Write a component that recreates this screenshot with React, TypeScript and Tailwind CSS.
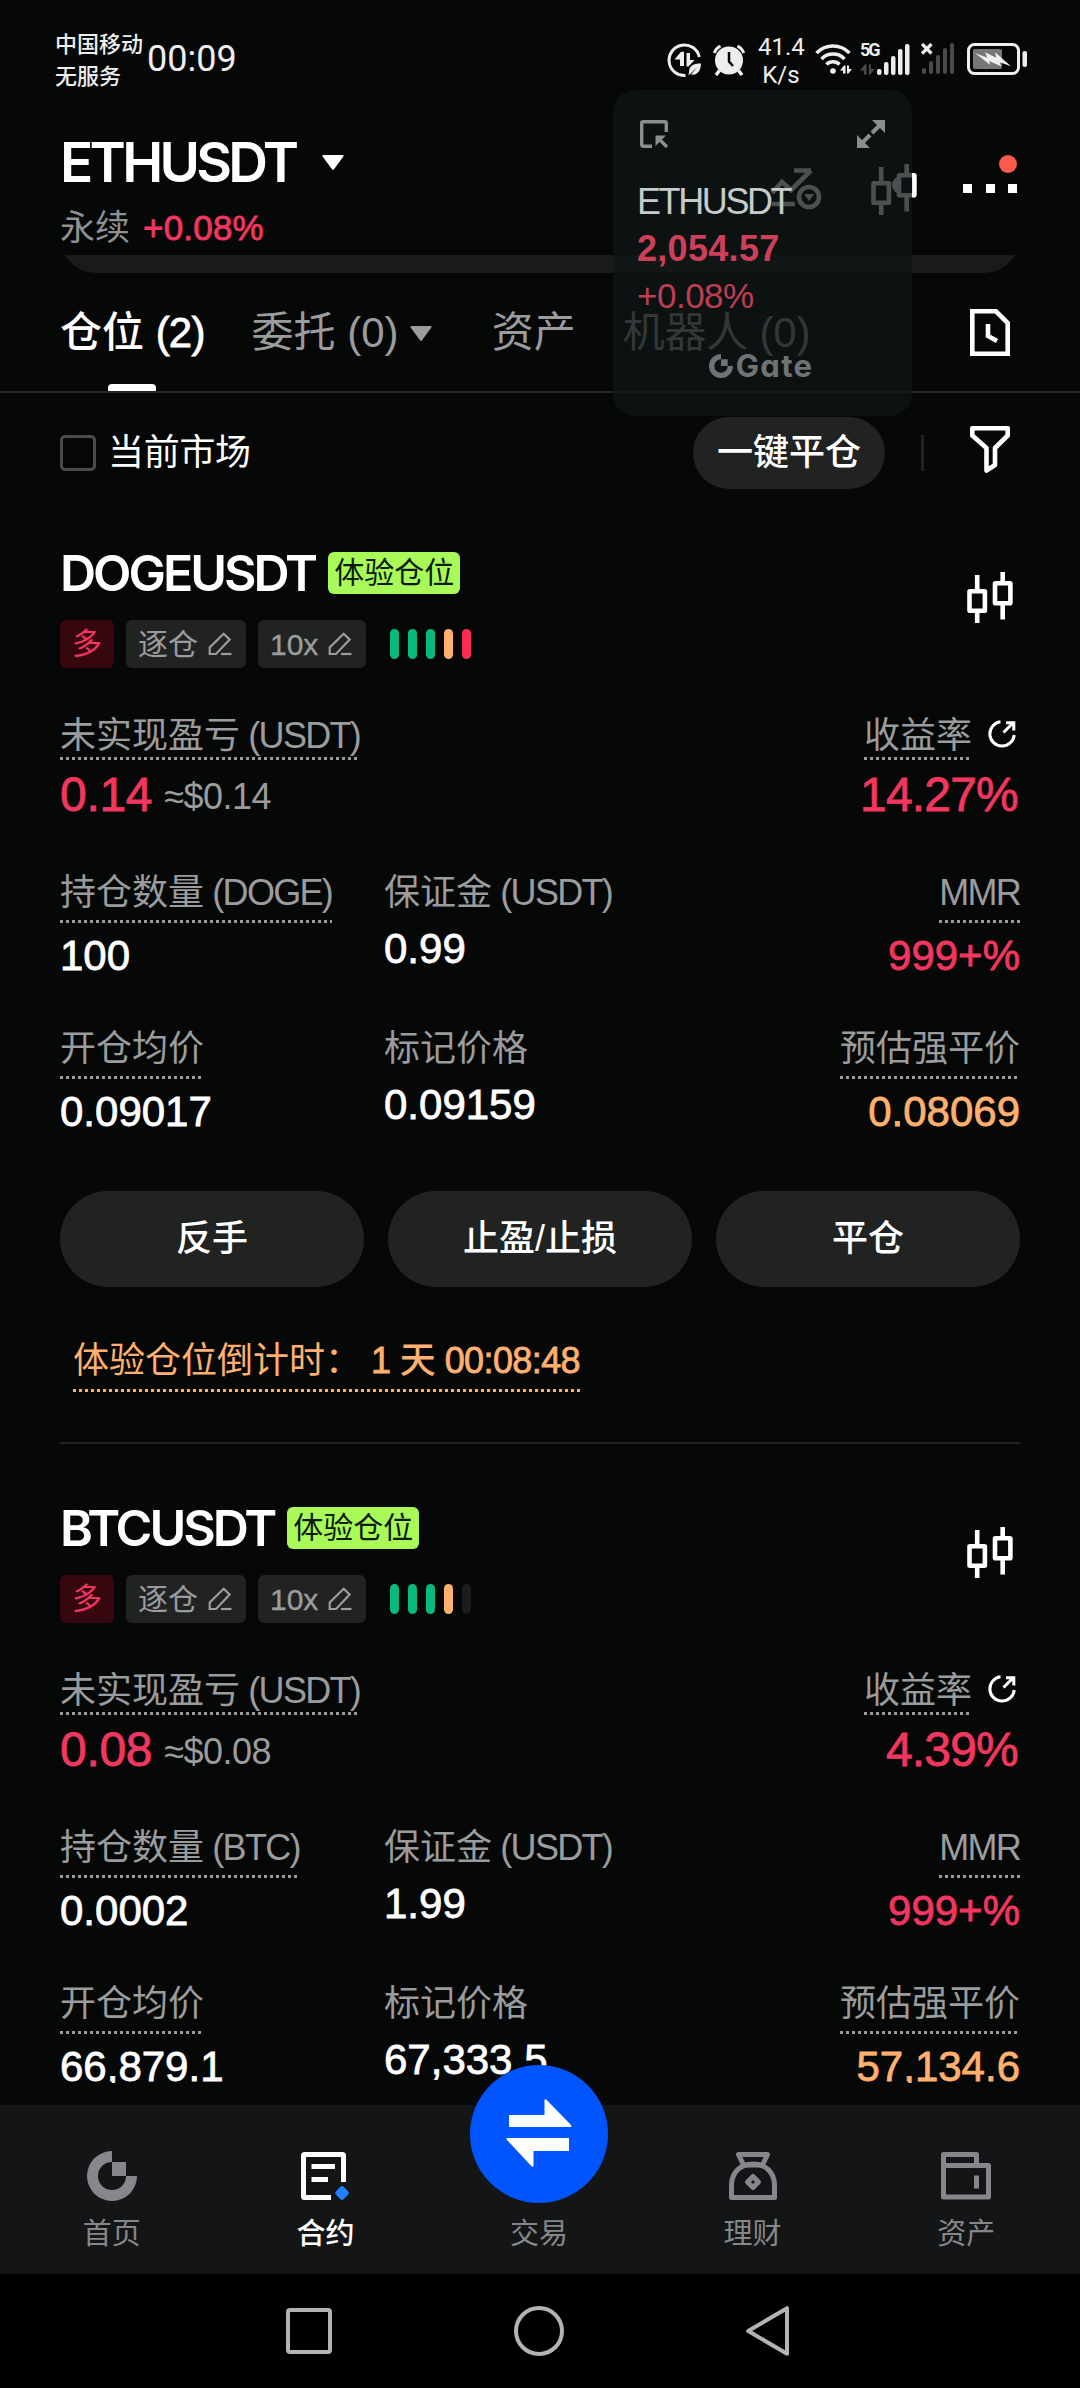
import React from 'react';
import clsx from 'clsx';

type Bar = 'green' | 'orange' | 'red' | 'empty';

interface Position {
  symbol: string;
  coin: string;
  pnl: string;
  pnlUsd: string;
  roe: string;
  size: string;
  margin: string;
  entry: string;
  mark: string;
  liq: string;
  bars: Bar[];
}

const positions: Position[] = [
  {
    symbol: 'DOGEUSDT',
    coin: 'DOGE',
    pnl: '0.14',
    pnlUsd: '≈$0.14',
    roe: '14.27%',
    size: '100',
    margin: '0.99',
    entry: '0.09017',
    mark: '0.09159',
    liq: '0.08069',
    bars: ['green', 'green', 'green', 'orange', 'red'],
  },
  {
    symbol: 'BTCUSDT',
    coin: 'BTC',
    pnl: '0.08',
    pnlUsd: '≈$0.08',
    roe: '4.39%',
    size: '0.0002',
    margin: '1.99',
    entry: '66,879.1',
    mark: '67,333.5',
    liq: '57,134.6',
    bars: ['green', 'green', 'green', 'orange', 'empty'],
  },
];

const barColors: Record<Bar, string> = {
  green: 'bg-[#06b97c]',
  orange: 'bg-[#ffb06e]',
  red: 'bg-[#ff2b57]',
  empty: 'bg-[#1b1c1c]',
};

// Liberation Sans has no medium weight, a thin stroke fakes it
const medium = '[-webkit-text-stroke:0.8px_currentColor]';

function Candles({ className }: { className?: string }) {
  return (
    <svg viewBox="0 0 46 51" className={clsx('w-[46px] h-[51px] shrink-0', className)} fill="none" stroke="currentColor" strokeWidth="4.6">
      <rect x="2.5" y="19.3" width="15.4" height="19.4" rx="0.5" />
      <path d="M10.2 3v16M10.2 39v12" />
      <rect x="28" y="11.3" width="15.4" height="20" rx="0.5" />
      <path d="M35.7 0v11M35.7 32v15.5" />
    </svg>
  );
}

function Pencil() {
  return (
    <svg viewBox="0 0 24 24" className="w-6 h-6 shrink-0" fill="none" stroke="currentColor" strokeWidth="2.2">
      <path d="M1.700 22V15.500L15.700 1.800l6 5.800L8 22H1.700Z" />
      <path d="M13 22h10.500" />
    </svg>
  );
}

function GateMark({ className }: { className?: string }) {
  return (
    <svg viewBox="0 0 50 50" className={className} fill="currentColor">
      <path d="M25 0A25 25 0 1 0 50 25H39A14 14 0 1 1 25 11V0Z" />
      <path d="M25 11h14v14H25z" />
    </svg>
  );
}

function Caret({ className }: { className?: string }) {
  return (
    <svg viewBox="0 0 22 15" className={clsx('w-[22px] h-[15px]', className)} fill="currentColor">
      <path d="M1.4 0h19.2c.9 0 1.3.9.8 1.6l-9.4 12.6c-.5.7-1.5.7-2 0L.6 1.6C.1.9.5 0 1.4 0Z" />
    </svg>
  );
}

function DottedLine() {
  return (
    <div className="h-[3px] w-full bg-[repeating-linear-gradient(90deg,currentColor_0_3px,transparent_3px_6px)]" />
  );
}

function StatusBar() {
  return (
    <div className="h-[117px] shrink-0 flex items-start justify-between pl-[55px] pr-[53px] text-[#eeeeee]">
      <div className="flex items-start">
        <div className="w-[92px] pt-[29px] text-[22px] leading-8 font-medium whitespace-nowrap">
          <div>中国移动</div>
          <div>无服务</div>
        </div>
        <div className="pt-[38px] font-[Roboto] text-[36px] leading-[42px]">00:09</div>
      </div>
      <div className="flex items-start">
        {/* data saver */}
        <svg viewBox="0 0 36 36" className="w-9 h-9 mt-[43px]" fill="currentColor">
          <path d="M32.300 14A15.300 15.300 0 1 0 18.500 32.500" stroke="currentColor" strokeWidth="3" fill="none" />
          <path d="M7.500 16.500 14 8.800h3V23h-4v-6.500Z" />
          <path d="M19.500 10h3.500v7h4.500l-6 6.500h-2Z" />
          <path d="M22 29c0-6 4-8.500 12-8.500-.3 8-4 12-10 11l6-7-8.500 8Z" />
        </svg>
        <svg viewBox="0 0 32 32" className="w-8 h-8 mt-[44px] ml-[10px]" fill="currentColor">
          <circle cx="16" cy="16.500" r="14" />
          <path d="M1.200 9A13 13 0 0 1 7.500 2M24.500 2A13 13 0 0 1 30.800 9" stroke="currentColor" strokeWidth="3" fill="none" />
          <path d="M6.500 26.500 3 31M25.500 26.500 29 31" stroke="currentColor" strokeWidth="3.500" />
          <path d="M16 8v9.500l4 4.500" stroke="#060807" strokeWidth="2.500" fill="none" />
        </svg>
        <div className="w-[46px] ml-[13px] pt-[33px] text-center font-[Roboto] text-[24px] leading-7 whitespace-nowrap">
          <div>41.4</div>
          <div>K/s</div>
        </div>
        <svg viewBox="0 0 37 31" className="w-[37px] h-[31px] mt-[43px] ml-[11px]" fill="none" stroke="currentColor" strokeWidth="3.500">
          <path d="M1.500 10a23 23 0 0 1 33 0M6.500 16a16 16 0 0 1 23 0M11.500 21.500a9 9 0 0 1 13 0" />
          <circle cx="18" cy="28" r="2.800" fill="currentColor" stroke="none" />
          <path d="M25 27.500 29 22.500h1.500v8H28v-3ZM32 22.500h2V26h3l-3.500 4.500H32Z" fill="currentColor" stroke="none" />
        </svg>
        <div className="w-[50px] h-8 mt-[43px] ml-2 flex items-end relative">
          <span className="absolute left-0 -top-px font-[Roboto] text-[18px] leading-4 font-bold tracking-[-2px]">5G</span>
          <svg viewBox="0 0 50 31" className="w-[50px] h-[31px]" fill="currentColor">
            <path d="M0 26.500 5 20.500h1.500v10H4v-4ZM9 20.500h2V25h3.500l-4 5.500H9Z" fill="#4a4a4a" />
            <rect x="17" y="25" width="4.500" height="6" rx="2" />
            <rect x="24" y="18" width="4.500" height="13" rx="2" />
            <rect x="31" y="12" width="4.500" height="19" rx="2" />
            <rect x="38" y="5" width="4.500" height="26" rx="2" />
            <rect x="45" y="0" width="4.500" height="31" rx="2" />
          </svg>
        </div>
        <svg viewBox="0 0 34 31" className="w-[34px] h-[31px] mt-[43px] ml-[11px]" fill="#4a4a4a">
          <path d="m1 1 9.500 9.500M10.500 1 1 10.500" stroke="#eee" strokeWidth="3.300" />
          <rect x="1" y="25" width="4" height="6" rx="2" />
          <rect x="8" y="18" width="4" height="13" rx="2" />
          <rect x="15" y="12" width="4" height="19" rx="2" />
          <rect x="22" y="5" width="4" height="26" rx="2" />
          <rect x="29" y="0" width="4" height="31" rx="2" />
        </svg>
        <svg viewBox="0 0 60 32" className="w-[60px] h-8 mt-[43px] ml-3" fill="none">
          <rect x="1.500" y="1.500" width="50" height="29" rx="6" stroke="#eee" strokeWidth="3" />
          <rect x="6" y="6" width="29" height="20" rx="2" fill="#777" />
          <path d="m8 10 12.300 4.700L18 9.300l11.300 5.400L28 9.300l16 14-11.300-4L34 23.300 22 18l1.300 4Z" fill="#eee" />
          <rect x="55.500" y="8" width="4.500" height="16" rx="2" fill="#eee" />
        </svg>
      </div>
    </div>
  );
}

function Header() {
  return (
    <header className="h-[156px] shrink-0 flex justify-between pl-[60px] pr-[63px]">
      <div className="flex flex-col">
        <div className="flex items-center h-[88px]">
          <h1 className="font-[Inter] text-[55px] font-semibold tracking-[-3.700px] leading-[88px] pt-0.5">ETHUSDT</h1>
          <Caret className="ml-[27px] mt-0.5" />
        </div>
        <div className="flex items-center h-[46px] gap-[13px] text-[35px]">
          <span className="text-[#8f9192]">永续</span>
          <span className={clsx('text-[#f2365f] tracking-[0.200px]', medium)}>+0.08%</span>
        </div>
      </div>
      <div className="flex items-start h-[120px] pt-[47px]">
        <svg viewBox="0 0 52 44" className="w-[52px] h-11 mt-1" fill="none" stroke="currentColor" strokeWidth="4.600">
          <path d="M2 25 12 14l9 8L41 2.500M24 2.500h17M2 36h23" />
          <circle cx="39" cy="29" r="10" />
          <path d="m34 26 5 7 5-7Z" fill="currentColor" stroke="none" />
        </svg>
        <Candles className="ml-[49px]" />
        <div className="relative ml-[46px] mt-[20px] flex gap-[13.500px]">
          <span className="w-[9px] h-[9px] bg-white" />
          <span className="w-[9px] h-[9px] bg-white" />
          <span className="w-[9px] h-[9px] bg-white" />
          <span className="absolute right-0 -top-[29px] w-[18px] h-[18px] rounded-full bg-[#fb5a4a]" />
        </div>
      </div>
    </header>
  );
}

function Tabs() {
  return (
    <div className="h-[120px] shrink-0 border-b-2 border-[#252626] flex items-start justify-between px-[60px] text-[42px] leading-[60px] text-[#9a9c9d]">
      <div className="flex pt-[30px] whitespace-nowrap">
        <div className="relative text-white font-medium">
          仓位 <span className={clsx('tracking-[-0.800px]', medium)}>(2)</span>
          <span className="absolute left-[48px] top-[81px] w-12 h-[7px] rounded-t-[4px] bg-white" />
        </div>
        <div className="flex items-center ml-[47px]">
          委托 (0)
          <Caret className="ml-[11px]" />
        </div>
        <div className="ml-[60px]">资产</div>
        <div className="ml-[47px] tracking-[-0.200px]">机器人 (0)</div>
      </div>
      <svg viewBox="0 0 40 47" className="w-10 h-[47px] mt-9 mr-[10px] text-white" fill="none" stroke="currentColor" strokeWidth="4.600">
        <path d="M2.300 2.300H26L37.700 14v30.700H2.300Z" />
        <path d="M18 15v12l9 5" />
      </svg>
    </div>
  );
}

function Filters() {
  return (
    <div className="h-[120px] shrink-0 flex items-center justify-between pl-[60px] pr-[70px]">
      <div className="flex items-center gap-3">
        <span className="w-9 h-9 rounded-[5px] border-[3px] border-[#4a4b4d]" />
        <span className="text-[36px] leading-9 tracking-[-0.300px]">当前市场</span>
      </div>
      <div className="flex items-center">
        <button className="w-[192px] h-[72px] rounded-full bg-[#212222] text-[36px] font-medium">一键平仓</button>
        <span className="w-[3px] h-9 ml-9 bg-[#212323]" />
        <svg viewBox="0 0 40 47" className="w-10 h-[47px] ml-[46px] mb-2" fill="none" stroke="currentColor" strokeWidth="4.600" strokeLinejoin="round">
          <path d="M2.300 2.300h35.400v7.200L25 22v17l-8.500 5.500V22L2.300 9.500Z" />
        </svg>
      </div>
    </div>
  );
}

function Label({ text, unit }: { text?: string; unit?: string }) {
  return (
    <>
      {text}
      {unit && <span className="tracking-[-1.700px]">{text ? ` (${unit})` : unit}</span>}
    </>
  );
}

interface StatProps {
  label?: string;
  unit?: string;
  value: string;
  dotted?: boolean;
  right?: boolean;
  tone?: string;
}

function Stat({ label, unit, value, dotted, right, tone }: StatProps) {
  return (
    <div className={clsx('flex flex-col', right ? 'items-end' : 'items-start')}>
      <div className="text-[#9a9c9d] text-[36px]">
        <div className="h-[55px] leading-[56px] whitespace-nowrap">
          <Label text={label} unit={unit} />
        </div>
        {dotted && <DottedLine />}
      </div>
      <div className={clsx('text-[42px] leading-[60px]', medium, dotted ? 'mt-[3px]' : '-mt-px', tone)}>{value}</div>
    </div>
  );
}

function Tag({ children }: { children: React.ReactNode }) {
  return (
    <span className="h-12 pl-3 pr-[14px] flex items-center gap-[10px] rounded-[6px] bg-[#212323] text-[#9a9c9d] text-[30px]">
      {children}
      <Pencil />
    </span>
  );
}

function PositionCard({ pos }: { pos: Position }) {
  return (
    <section className="px-[60px] flex flex-col shrink-0">
      <div className="flex justify-between">
        <div className="flex flex-col">
          <div className="flex items-center h-[66px] gap-[13px]">
            <h2 className="font-[Inter] text-[50px] font-semibold tracking-[-3px] leading-[66px]">{pos.symbol}</h2>
            <span className="h-[42px] px-1.5 rounded-[6px] bg-[#a9fa58] text-[#0a1a06] text-[30px] leading-[42px]">体验仓位</span>
          </div>
          <div className="flex items-center gap-3 mt-[14px]">
            <span className="w-[54px] h-12 rounded-[6px] bg-[#37070f] text-[#f2365f] text-[30px] leading-[48px] text-center">多</span>
            <Tag>逐仓</Tag>
            <Tag>
              <span className="[-webkit-text-stroke:0.4px_currentColor]">10x</span>
            </Tag>
            <div className="flex gap-[9px] ml-3">
              {pos.bars.map((b, i) => (
                <span key={i} className={clsx('w-[9px] h-[30px] rounded-full', barColors[b])} />
              ))}
            </div>
          </div>
        </div>
        <Candles className="mt-8 mr-[7px]" />
      </div>

      {/* PnL */}
      <div className="flex justify-between mt-[40px]">
        <div className="flex flex-col items-start">
          <div className="text-[36px] text-[#9a9c9d]">
            <div className="h-[49px] leading-[56px] whitespace-nowrap">
              <Label text="未实现盈亏" unit="USDT" />
            </div>
            <DottedLine />
          </div>
          <div className="flex items-center gap-3 leading-[71px]">
            <span className={clsx('text-[48px] leading-[70px] text-[#f2365f] tracking-[-0.300px]', medium)}>{pos.pnl}</span>
            <span className="text-[36px] leading-[70px] pt-0.5 -mb-0.5 text-[#9a9c9d] tracking-[-0.500px]">{pos.pnlUsd}</span>
          </div>
        </div>
        <div className="flex flex-col items-end">
          <div className="flex items-center">
            <div className="text-[36px] text-[#9a9c9d]">
              <div className="h-[49px] leading-[56px]">收益率</div>
              <DottedLine />
            </div>
            <svg viewBox="0 0 28 28" className="w-7 h-7 ml-4 mr-1" fill="none" stroke="currentColor" strokeWidth="3">
              <path d="M12.500 1.800A12.200 12.200 0 1 0 26.200 15" />
              <path d="M15.500 12.500 25 3M18 2.700h7.800V10.500" />
            </svg>
          </div>
          <div className={clsx('text-[48px] leading-[70px] text-[#f2365f] tracking-[-0.800px] pr-0.5', medium)}>{pos.roe}</div>
        </div>
      </div>

      <div className="grid grid-cols-[324px_1fr_auto] gap-y-[35px] mt-[35px]">
        <Stat label="持仓数量" unit={pos.coin} value={pos.size} dotted />
        <Stat label="保证金" unit="USDT" value={pos.margin} />
        <Stat unit="MMR" value="999+%" dotted right tone="text-[#f2365f]" />
        <Stat label="开仓均价" value={pos.entry} dotted />
        <Stat label="标记价格" value={pos.mark} />
        <Stat label="预估强平价" value={pos.liq} dotted right tone="text-[#ffb06e]" />
      </div>

      <div className="grid grid-cols-3 gap-6 mt-[49px]">
        {['反手', '止盈/止损', '平仓'].map((label) => (
          <button key={label} className="h-24 rounded-full bg-[#212222] text-[36px] font-medium">{label}</button>
        ))}
      </div>

      <div className="mt-[45px] ml-[13px] self-start text-[#ffb06e] text-[36px]">
        <div className="flex h-[57px] leading-[58px] whitespace-nowrap">
          <span>体验仓位倒计时：</span>
          <span className="ml-[10px] font-medium tracking-[-0.600px]">
            <span className={medium}>1</span> 天 <span className={medium}>00:08:48</span>
          </span>
        </div>
        <DottedLine />
      </div>
      <div className="h-0.5 mt-[50px] bg-[#212222]" />
    </section>
  );
}

function PriceWidget() {
  return (
    <div className="absolute left-[613px] top-[90px] w-[299px] h-[326px] rounded-[22px] bg-[#0f1516]/75 pt-[30px] pl-6 pr-[27px] flex flex-col">
      <div className="flex justify-between text-[#8b8e8f]">
        <svg viewBox="0 0 28 28" className="w-7 h-7 ml-[3px]" fill="none" stroke="currentColor" strokeWidth="3.400">
          <path d="M26.300 12V3.200a1.500 1.500 0 0 0-1.500-1.500H3.200a1.500 1.500 0 0 0-1.500 1.500v21.600a1.500 1.500 0 0 0 1.500 1.500H12" />
          <path d="m18 18 9 9" />
          <path d="M15.500 15.500H26L15.500 26Z" fill="currentColor" stroke="none" />
        </svg>
        <svg viewBox="0 0 28 28" className="w-7 h-7" fill="currentColor">
          <path d="M15 0h13v13ZM0 15v13h13Z" />
          <path d="m15 13 8-8M5 23l8-8" stroke="currentColor" strokeWidth="4" />
        </svg>
      </div>
      <div className="mt-[30px] text-[36px] leading-[47px] tracking-[-2.400px] text-[#c8cbcc]">ETHUSDT</div>
      <div className="text-[36px] leading-[47px] font-bold tracking-[0.300px] text-[#cc4159]">2,054.57</div>
      <div className="text-[35px] leading-[47px] tracking-[-0.500px] text-[#c03d54]">+0.08%</div>
      <div className="mt-[31px] flex items-center justify-center gap-[3px] text-[#707375]">
        <GateMark className="w-6 h-6" />
        <span className="font-[Inter] font-bold text-[31px] leading-8 tracking-[1.300px] [font-feature-settings:'cv11']">Gate</span>
      </div>
      <span className="absolute left-[279px] top-[86px] w-[9px] h-[18px] rounded-l-full bg-[#4b4f51]" />
    </div>
  );
}

function NavItem({ label, active, children }: { label: string; active?: boolean; children: React.ReactNode }) {
  return (
    <div className={clsx('flex-1 flex flex-col items-center pt-[46px]', active ? 'text-white' : 'text-[#85878a]')}>
      <div className="h-[50px] flex items-center">{children}</div>
      <div className={clsx('mt-[11px] text-[29px] leading-[44px]', active && 'font-medium')}>{label}</div>
    </div>
  );
}

function BottomNav() {
  return (
    <nav className="relative h-[169px] shrink-0 bg-[#141516] flex pl-[5px] pr-[7px]">
      <NavItem label="首页">
        <GateMark className="w-[50px] h-[50px]" />
      </NavItem>
      <NavItem label="合约" active>
        <svg viewBox="0 0 50 50" className="w-[50px] h-[50px]" fill="none" stroke="currentColor" strokeWidth="5">
          <path d="M43.500 31V4.500a1 1 0 0 0-1-1h-38a1 1 0 0 0-1 1v41a1 1 0 0 0 1 1H31" />
          <path d="M11.500 15.500H35M11.500 28.500H28" />
          <rect x="36.500" y="36.500" width="11" height="11" rx="2.500" transform="rotate(45 42 42)" fill="#2080ff" stroke="none" />
        </svg>
      </NavItem>
      <NavItem label="交易">
        <span />
      </NavItem>
      <NavItem label="理财">
        <svg viewBox="0 0 50 50" className="w-[50px] h-[50px]" fill="none" stroke="currentColor" strokeWidth="5" strokeLinejoin="round">
          <path d="M10.500 3.500h29L34.500 14h-19Z" />
          <path d="M3.500 46.500V34C3.500 21 13 13 25 13s21.500 8 21.500 21v12.500Z" />
          <path d="m25 25.500 5.500 5.500-5.500 5.500-5.500-5.500Z" />
        </svg>
      </NavItem>
      <NavItem label="资产">
        <svg viewBox="0 0 50 50" className="w-[50px] h-[50px]" fill="none" stroke="currentColor" strokeWidth="5" strokeLinejoin="round">
          <path d="M2.500 14.500h45v31.500h-45V3.500h33v11" />
          <path d="M35.500 24.500v13" />
        </svg>
      </NavItem>
      <div className="absolute left-[470px] -top-10 w-[138px] h-[138px] rounded-full bg-[#0055ff] flex items-center justify-center">
        <svg viewBox="-1 -2 68 72" className="w-[68px] h-[72px]" fill="#fff">
          <path d="M3 15h35.500V.5c0-1.400 1-1.800 2-.8L65 25c1 1 .6 2-.8 2H3V15Z" />
          <path d="M63 51H27.500v14.500c0 1.400-1 1.800-2 .8L1 40c-1-1-.6-2 .8-2H63v13Z" />
        </svg>
      </div>
    </nav>
  );
}

function SystemNav() {
  return (
    <div className="h-[114px] shrink-0 bg-black flex items-center pl-[286px] text-[#b3b3b3]">
      <span className="w-[46px] h-[46px] rounded-[4px] border-4 border-[#b3b3b3]" />
      <span className="ml-[182px] w-[50px] h-[50px] rounded-full border-4 border-[#b3b3b3]" />
      <svg viewBox="0 0 43 50" className="ml-[182px] w-[43px] h-[50px]" fill="none" stroke="currentColor" strokeWidth="4" strokeLinejoin="round">
        <path d="M41 2.200v45.600L2.200 25Z" />
      </svg>
    </div>
  );
}

export default function App() {
  return (
    <div className="relative w-[1080px] h-[2388px] overflow-hidden bg-[#060807] text-white flex flex-col font-['Liberation_Sans','Noto_Sans_CJK_SC',sans-serif]">
      <StatusBar />
      <Header />
      <div className="-mt-[18px] mx-[60px] h-[18px] shrink-0 overflow-hidden flex flex-col justify-end">
        <div className="h-[72px] shrink-0 rounded-[36px] bg-[#191a1b]" />
      </div>
      <Tabs />
      <Filters />
      <main className="h-[1570px] shrink-0 overflow-hidden flex flex-col gap-[51px] pt-[27px]">
        {positions.map((p) => (
          <PositionCard key={p.symbol} pos={p} />
        ))}
      </main>
      <div className="h-[22px] shrink-0" />
      <BottomNav />
      <SystemNav />
      <PriceWidget />
    </div>
  );
}
